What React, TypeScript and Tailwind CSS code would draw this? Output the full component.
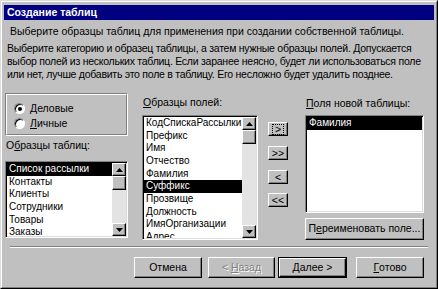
import React from "react";

const raised =
  "border border-t-white border-l-white border-r-black border-b-black shadow-[inset_-1px_-1px_0_#808080] bg-[#c0c0c0]";
const sunken =
  "border border-t-[#808080] border-l-[#808080] border-r-white border-b-white shadow-[inset_1px_1px_0_#000,inset_-1px_-1px_0_#dcdcdc]";

const Tri = ({ down }: { down?: boolean }) => (
  <svg width="7" height="4" viewBox="0 0 7 4">
    <polygon points={down ? "0,0 7,0 3.5,4" : "0,4 7,4 3.5,0"} fill="#000" />
  </svg>
);

const ScrollBar = () => (
  <div className="flex flex-col w-[14px] h-full shrink-0">
    <div className={`${raised} h-[13px] shrink-0 flex items-center justify-center`}>
      <Tri />
    </div>
    <div className={`${raised} h-[14px] shrink-0`} />
    <div className="flex-1 bg-[#e3e3e3]" />
    <div className={`${raised} h-[13px] shrink-0 flex items-center justify-center`}>
      <Tri down />
    </div>
  </div>
);

const ListBox = ({
  items,
  selected,
  scroll,
  className,
}: {
  items: string[];
  selected: number;
  scroll?: boolean;
  className: string;
}) => (
  <div className={`${sunken} bg-white flex p-[1px] shrink-0 ${className}`}>
    <div className="flex-1 overflow-hidden">
      {items.map((it, i) => (
        <div
          key={it}
          className={`h-[12.67px] leading-[12.67px] pl-[2px] whitespace-nowrap text-[10px] ${
            i === selected ? "bg-black text-white" : "text-black"
          }`}
        >
          {it}
        </div>
      ))}
    </div>
    {scroll && <ScrollBar />}
  </div>
);

const Radio = ({ checked, children }: { checked?: boolean; children: React.ReactNode }) => (
  <div className="flex items-center gap-[5px] h-[15px]">
    <div className="w-[11px] h-[11px] rounded-full bg-white border border-t-[#808080] border-l-[#808080] border-r-white border-b-white shadow-[inset_1px_1px_0_#000] flex items-center justify-center">
      {checked && <div className="w-[4px] h-[4px] rounded-full bg-black" />}
    </div>
    <span>{children}</span>
  </div>
);

const SmallBtn = ({ label, focus }: { label: string; focus?: boolean }) => (
  <div className={`${raised} w-[20px] h-[14px] shrink-0 flex items-center justify-center text-[10.5px] leading-none`}>
    <span className={focus ? "border border-dotted border-black px-[2px] leading-[9px]" : ""}>{label}</span>
  </div>
);

export default function App() {
  return (
    <div className="w-[438px] h-[289px] bg-[#c0c0c0] font-['Liberation_Sans',Arial,sans-serif] text-[10.5px] text-black overflow-hidden">
      <div className="h-full border border-t-[#dcdcdc] border-l-[#dcdcdc] border-r-black border-b-black">
        <div className="h-full border border-t-white border-l-white border-r-[#808080] border-b-[#808080] px-[2px] pt-[3px] flex flex-col">
          <div className="h-[15px] shrink-0 bg-[#000080] text-white font-bold leading-[15px] pl-[3px]">
            Создание таблиц
          </div>

          <div className="mt-[5px] pl-[6px] leading-[12px] whitespace-nowrap">
            Выберите образцы таблиц для применения при создании собственной таблицы.
          </div>

          <div className="mt-[5px] pl-[3px] leading-[13px] whitespace-nowrap tracking-[-0.25px]">
            Выберите категорию и образец таблицы, а затем нужные образцы полей. Допускается
            <br />
            выбор полей из нескольких таблиц. Если заранее неясно, будет ли использоваться поле
            <br />
            или нет, лучше добавить это поле в таблицу. Его несложно будет удалить позднее.
          </div>

          <div className="flex mt-[14px] pl-[1px] shrink-0">
            <div className="w-[123px] flex flex-col -mt-[2px]">
              <div className="h-[43px] shrink-0 border border-t-[#808080] border-l-[#808080] border-r-white border-b-white">
                <div className="h-full border border-t-white border-l-white border-r-[#808080] border-b-[#808080] pl-[7px] pt-[6px]">
                  <Radio checked>
                    <span className="underline">Д</span>еловые
                  </Radio>
                  <Radio>
                    <span className="underline">Л</span>ичные
                  </Radio>
                </div>
              </div>
              <div className="mt-[3px] leading-[13px] pl-[1px]">
                О<span className="underline">б</span>разцы таблиц:
              </div>
              <ListBox
                className="mt-[9px] h-[77px]"
                selected={0}
                scroll
                items={["Список рассылки", "Контакты", "Клиенты", "Сотрудники", "Товары", "Заказы"]}
              />
            </div>

            <div className="w-[116px] ml-[14px] flex flex-col">
              <div className="mt-[1px] leading-[13px] pl-[1px]">
                <span className="underline">О</span>бразцы полей:
              </div>
              <ListBox
                className="mt-[6px] h-[125px]"
                selected={5}
                scroll
                items={[
                  "КодСпискаРассылки",
                  "Префикс",
                  "Имя",
                  "Отчество",
                  "Фамилия",
                  "Суффикс",
                  "Прозвище",
                  "Должность",
                  "ИмяОрганизации",
                  "Адрес",
                ]}
              />
            </div>

            <div className="w-[20px] ml-[10px] flex flex-col pt-[27px] gap-[10px]">
              <SmallBtn label=">" focus />
              <SmallBtn label=">>" />
              <SmallBtn label="<" />
              <div className="-mt-[1px]">
                <SmallBtn label="<<" />
              </div>
            </div>

            <div className="w-[119px] ml-[17px] flex flex-col">
              <div className="mt-[2px] leading-[13px] pl-[1px]">
                <span className="underline">П</span>оля новой таблицы:
              </div>
              <ListBox className="mt-[5px] h-[98px]" selected={0} items={["Фамилия"]} />
              <div className={`${raised} mt-[5px] h-[22px] shrink-0 flex items-center justify-center whitespace-nowrap`}>
                П<span className="underline">е</span>реименовать поле...
              </div>
            </div>
          </div>

          <div className="mt-[6px] mx-[6px] h-[2px] shrink-0 border-t border-t-[#808080] border-b border-b-white" />

          <div className="flex mt-[9px] pl-[130px] shrink-0">
            <div className={`${raised} w-[68px] h-[21px] flex items-center justify-center`}>Отмена</div>
            <div
              className={`${raised} ml-[6px] w-[67px] h-[21px] flex items-center justify-center text-[#808080] [text-shadow:1px_1px_0_#fff]`}
            >
              &lt;&nbsp;<span className="underline">Н</span>азад
            </div>
            <div className="ml-[3px] w-[69px] h-[21px] border border-black">
              <div className={`${raised} h-full flex items-center justify-center`}>
                <span className="underline">Д</span>алее &gt;
              </div>
            </div>
            <div className={`${raised} ml-[9px] w-[68px] h-[21px] flex items-center justify-center`}>
              <span className="underline">Г</span>отово
            </div>
          </div>
        </div>
      </div>
    </div>
  );
}
